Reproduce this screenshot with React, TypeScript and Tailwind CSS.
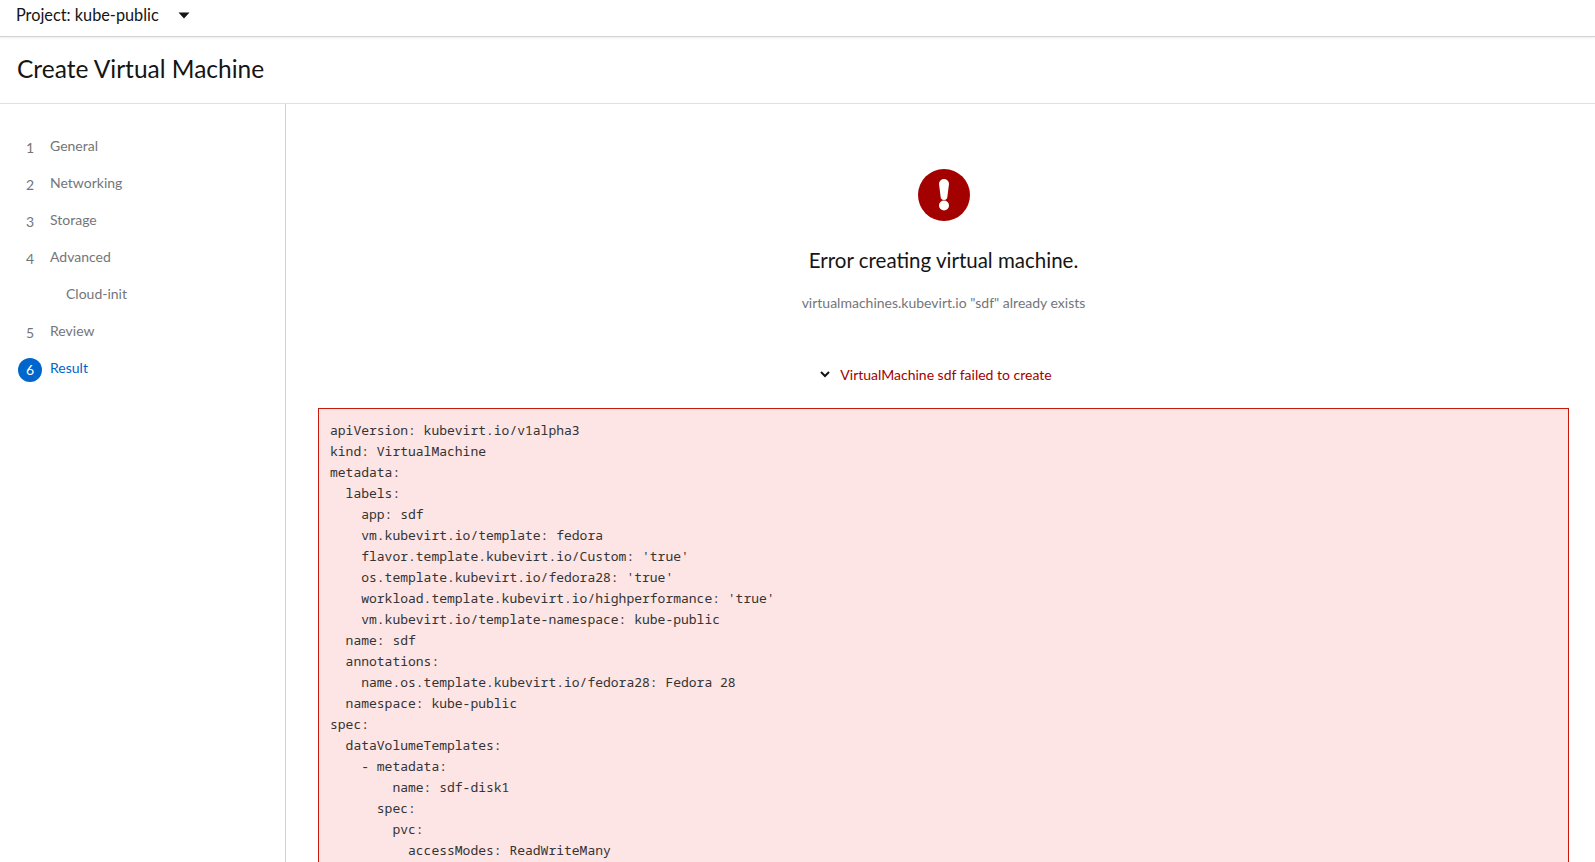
const steps = [
  { num: "1", label: "General" },
  { num: "2", label: "Networking" },
  { num: "3", label: "Storage" },
  { num: "4", label: "Advanced" },
  { num: "", label: "Cloud-init", sub: true },
  { num: "5", label: "Review" },
  { num: "6", label: "Result", active: true },
];

const yaml = `apiVersion: kubevirt.io/v1alpha3
kind: VirtualMachine
metadata:
  labels:
    app: sdf
    vm.kubevirt.io/template: fedora
    flavor.template.kubevirt.io/Custom: 'true'
    os.template.kubevirt.io/fedora28: 'true'
    workload.template.kubevirt.io/highperformance: 'true'
    vm.kubevirt.io/template-namespace: kube-public
  name: sdf
  annotations:
    name.os.template.kubevirt.io/fedora28: Fedora 28
  namespace: kube-public
spec:
  dataVolumeTemplates:
    - metadata:
        name: sdf-disk1
      spec:
        pvc:
          accessModes: ReadWriteMany`;

function WizardNav() {
  return (
    <nav className="w-[286px] shrink-0 border-r border-[#d2d2d2] pt-[23px] pl-[18px]">
      <ul>
        {steps.map((step) => (
          <li key={step.label} className="flex h-[37px] items-center text-[14px]">
            {!step.sub && (
              <span
                className={
                  step.active
                    ? "mt-[4px] flex h-6 w-6 items-center justify-center rounded-full bg-[#06c] text-white"
                    : "mt-[4px] flex h-6 w-6 items-center justify-center text-[#737679]"
                }
              >
                {step.num}
              </span>
            )}
            <span
              className={
                step.sub
                  ? "ml-[48px] text-[#737679]"
                  : step.active
                    ? "ml-[8px] text-[#06c]"
                    : "ml-[8px] text-[#737679]"
              }
            >
              {step.label}
            </span>
          </li>
        ))}
      </ul>
    </nav>
  );
}

export default function App() {
  return (
    <div className="flex h-[862px] flex-col overflow-hidden bg-white font-['Lato',sans-serif] text-[#151515]">
      <div className="flex h-[37px] shrink-0 items-center border-b border-[#d2d2d2] pb-[6px] pl-4 shadow-[0_1px_2px_rgba(0,0,0,0.08)]">
        <span className="text-[16.3px]">Project: kube-public</span>
        <svg className="mt-[1px] ml-[19px]" width="12" height="7" viewBox="0 0 12 7">
          <path d="M0.5 0.5h11L6 6.5z" fill="#151515" />
        </svg>
      </div>

      <div className="flex h-[67px] shrink-0 items-center border-b border-[#e0e0e0] pb-[1px] pl-[17px]">
        <h1 className="text-[24.5px]">Create Virtual Machine</h1>
      </div>

      <div className="flex min-h-0 flex-1">
        <WizardNav />
        <main className="min-w-0 flex-1 pr-[26px] pl-[32px]">
          <div className="flex flex-col items-center pt-[65px]">
            <svg width="52" height="52" viewBox="0 0 52 52">
              <circle cx="26" cy="26" r="26" fill="#a30000" />
              <path d="M21 15a5 5 0 0 1 10 0l-1.6 12.5a3.4 3.4 0 0 1-6.8 0z" fill="#fff" />
              <circle cx="26" cy="36.5" r="5" fill="#fff" />
            </svg>
            <h2 className="mt-[24px] text-[20.5px] leading-[30px]">Error creating virtual machine.</h2>
            <p className="mt-[17px] text-[14px] leading-[21px] text-[#737679]">
              virtualmachines.kubevirt.io "sdf" already exists
            </p>
            <div className="mt-[51px] mr-[15px] flex items-center text-[14px] leading-[21px] text-[#a30000]">
              <svg className="mr-[10px]" width="10" height="7" viewBox="0 0 10 7">
                <path d="M1 1l4 4 4-4" fill="none" stroke="#151515" strokeWidth="2" />
              </svg>
              VirtualMachine sdf failed to create
            </div>
          </div>
          <pre className="mt-[23px] border border-[#c9190b] bg-[#fde5e5] px-[11px] pt-[11px] pb-[40px] font-['Noto_Sans_Mono','DejaVu_Sans_Mono',monospace] text-[13px] leading-[21px] text-[#333]">
            {yaml}
          </pre>
        </main>
      </div>
    </div>
  );
}
